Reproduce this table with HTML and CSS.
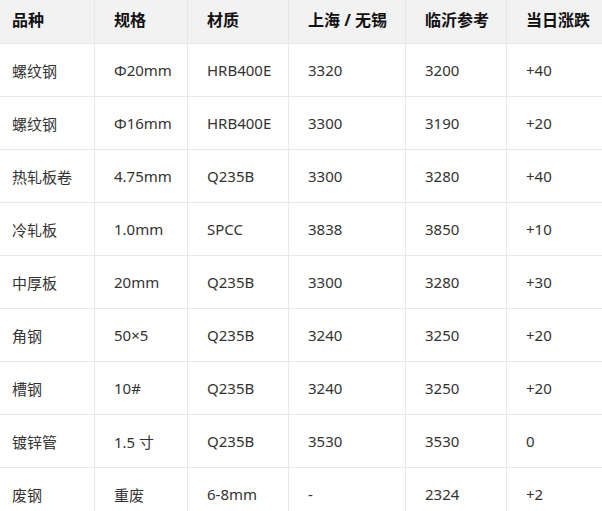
FILE: index.html
```html
<!DOCTYPE html>
<html lang="zh">
<head>
<meta charset="utf-8">
<link rel="stylesheet" href="styles.css">
</head>
<body>
<table class="price-table">
  <colgroup>
    <col class="c1"><col class="c2"><col class="c3"><col class="c4"><col class="c5"><col class="c6">
  </colgroup>
  <thead>
    <tr><th>品种</th><th>规格</th><th>材质</th><th>上海 / 无锡</th><th>临沂参考</th><th>当日涨跌</th></tr>
  </thead>
  <tbody>
    <tr><td>螺纹钢</td><td>Φ20mm</td><td>HRB400E</td><td>3320</td><td>3200</td><td>+40</td></tr>
    <tr><td>螺纹钢</td><td>Φ16mm</td><td>HRB400E</td><td>3300</td><td>3190</td><td>+20</td></tr>
    <tr><td>热轧板卷</td><td>4.75mm</td><td>Q235B</td><td>3300</td><td>3280</td><td>+40</td></tr>
    <tr><td>冷轧板</td><td>1.0mm</td><td>SPCC</td><td>3838</td><td>3850</td><td>+10</td></tr>
    <tr><td>中厚板</td><td>20mm</td><td>Q235B</td><td>3300</td><td>3280</td><td>+30</td></tr>
    <tr><td>角钢</td><td>50×5</td><td>Q235B</td><td>3240</td><td>3250</td><td>+20</td></tr>
    <tr><td>槽钢</td><td>10#</td><td>Q235B</td><td>3240</td><td>3250</td><td>+20</td></tr>
    <tr><td>镀锌管</td><td>1.5 寸</td><td>Q235B</td><td>3530</td><td>3530</td><td>0</td></tr>
    <tr><td>废钢</td><td>重废</td><td>6-8mm</td><td>-</td><td>2324</td><td>+2</td></tr>
  </tbody>
</table>
</body>
</html>
```
FILE: styles.css
```css
html, body {
  margin: 0;
  padding: 0;
  background: #ffffff;
}
body {
  font-family: "Noto Sans", "Noto Sans CJK SC", sans-serif;
  overflow: hidden;
}
.price-table {
  border-collapse: separate;
  border-spacing: 0;
  table-layout: fixed;
  width: 620px;
}
.c1 { width: 95px; }
.c2 { width: 93px; }
.c3 { width: 101px; }
.c4 { width: 117px; }
.c5 { width: 101px; }
.c6 { width: 113px; }
.price-table th,
.price-table td {
  text-align: left;
  padding: 0 0 0 19px;
  border-right: 1px solid #e8e8e8;
  border-bottom: 1px solid #e8e8e8;
  white-space: nowrap;
}
.price-table th:first-child,
.price-table td:first-child {
  padding-left: 12px;
}
.price-table th {
  height: 43px;
  background: #f2f2f2;
  color: #111;
  font-size: 16px;
  font-weight: 700;
  vertical-align: top;
  padding-top: 7px;
  box-sizing: border-box;
  height: 44px;
}
.price-table td {
  height: 52px;
  color: #333;
  font-size: 15px;
  vertical-align: middle;
}
```
